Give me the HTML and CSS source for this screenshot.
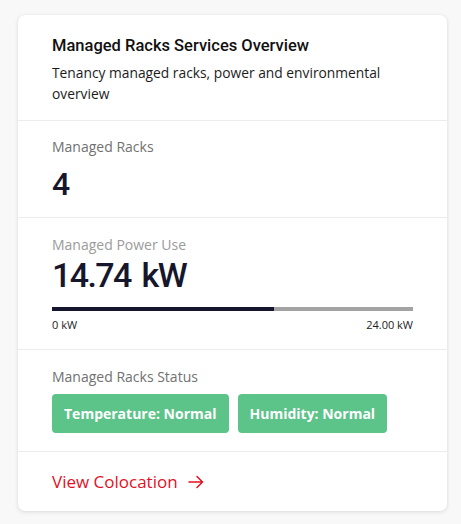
FILE: index.html
```html
<!DOCTYPE html>
<html lang="en">
<head>
<meta charset="utf-8">
<title>Managed Racks Services Overview</title>
<link rel="stylesheet" href="styles.css">
</head>
<body>
<div class="card">
  <div class="section header">
    <h2 class="title">Managed Racks Services Overview</h2>
    <p class="subtitle">Tenancy managed racks, power and environmental overview</p>
  </div>
  <div class="section racks">
    <div class="label">Managed Racks</div>
    <div class="value value-sm">4</div>
  </div>
  <div class="section power">
    <div class="label label-light">Managed Power Use</div>
    <div class="value value-lg">14.74 kW</div>
    <div class="bar"><div class="bar-fill" style="width:61.4%"></div></div>
    <div class="scale"><span>0 kW</span><span>24.00 kW</span></div>
  </div>
  <div class="section status">
    <div class="label">Managed Racks Status</div>
    <div class="badges">
      <span class="badge">Temperature: Normal</span>
      <span class="badge">Humidity: Normal</span>
    </div>
  </div>
  <div class="section footer">
    <a class="link" href="#">View Colocation
      <svg class="arrow" width="16" height="14" viewBox="0 0 16 14" aria-hidden="true">
        <path d="M1 7H14.5M9 1.5L14.5 7L9 12.5" fill="none" stroke="currentColor" stroke-width="1.5" stroke-linecap="round" stroke-linejoin="round"/>
      </svg>
    </a>
  </div>
</div>
</body>
</html>
```

FILE: styles.css
```css
html, body {
  margin: 0;
  padding: 0;
  background: #f8f8f8;
}
body {
  padding: 15px 14px 13px 18px;
  font-family: "Open Sans", "Liberation Sans", sans-serif;
  color: #1a1a1a;
}
.card {
  width: 429px;
  height: 496px;
  box-sizing: border-box;
  background: #ffffff;
  border-radius: 7px;
  box-shadow: 0 1px 4px rgba(0, 0, 0, 0.12), 0 0 1px rgba(0, 0, 0, 0.06);
  display: flex;
  flex-direction: column;
}
.section {
  padding: 0 34px;
  border-bottom: 1px solid #ececec;
}
.section:last-child {
  border-bottom: none;
}
.header {
  padding-top: 20px;
  padding-bottom: 16px;
}
.title {
  margin: 0;
  font-family: Roboto, "Liberation Sans", sans-serif;
  font-weight: 500;
  font-size: 16.5px;
  line-height: 22px;
  color: #111111;
}
.subtitle {
  margin: 5px 0 0;
  font-size: 13.8px;
  line-height: 21px;
  color: #1c1c1c;
}
.label {
  font-size: 14px;
  line-height: 20px;
  color: #717171;
}
.label-light {
  color: #9b9b9b;
}
.value {
  font-family: Roboto, "Liberation Sans", sans-serif;
  font-weight: 500;
  color: #16172c;
}
.racks {
  padding-top: 16px;
  padding-bottom: 14px;
}
.value-sm {
  margin-top: 8px;
  font-size: 32px;
  line-height: 38px;
}
.power {
  padding-top: 17px;
  padding-bottom: 16px;
}
.value-lg {
  font-size: 34px;
  line-height: 40px;
  letter-spacing: -1.6px;
  word-spacing: 4px;
}
.bar {
  margin-top: 12px;
  height: 4px;
  background: #a3a3a3;
  display: flex;
}
.bar-fill {
  background: #15152f;
  height: 100%;
}
.scale {
  margin-top: 6px;
  display: flex;
  justify-content: space-between;
  font-size: 11px;
  line-height: 16px;
  color: #222222;
}
.status {
  padding-top: 17px;
  padding-bottom: 18px;
}
.badges {
  margin-top: 7px;
  display: flex;
  gap: 9px;
}
.badge {
  display: inline-block;
  background: #5cc389;
  color: #ffffff;
  font-weight: 700;
  font-size: 14px;
  line-height: 19px;
  padding: 10px 12px;
  border-radius: 4px;
}
.footer {
  padding-top: 18px;
  padding-bottom: 17px;
}
.link {
  display: inline-flex;
  align-items: center;
  gap: 10px;
  color: #e3101f;
  text-decoration: none;
  font-size: 17px;
  line-height: 24px;
}
.arrow {
  display: block;
}
```
